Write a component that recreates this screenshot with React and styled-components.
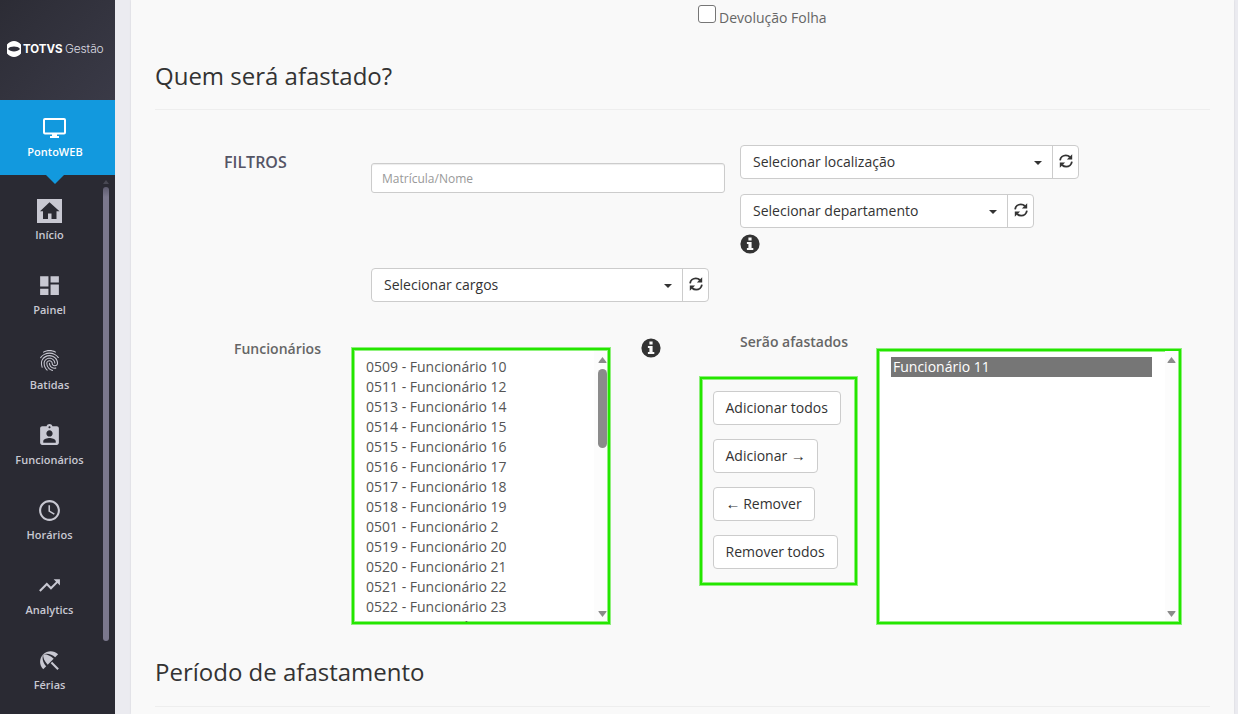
import React from "react";
import styled, { createGlobalStyle } from "styled-components";
import {
  MdDashboard,
  MdFingerprint,
  MdAssignmentInd,
  MdAccessTime,
  MdTrendingUp,
  MdBeachAccess,
} from "react-icons/md";

const employees = [
  "0509 - Funcionário 10",
  "0511 - Funcionário 12",
  "0513 - Funcionário 14",
  "0514 - Funcionário 15",
  "0515 - Funcionário 16",
  "0516 - Funcionário 17",
  "0517 - Funcionário 18",
  "0518 - Funcionário 19",
  "0501 - Funcionário 2",
  "0519 - Funcionário 20",
  "0520 - Funcionário 21",
  "0521 - Funcionário 22",
  "0522 - Funcionário 23",
  "0523 - Funcionário 24",
];

const navItems = [
  { label: "Início", icon: HomeBox },
  { label: "Painel", icon: MdDashboard },
  { label: "Batidas", icon: MdFingerprint },
  { label: "Funcionários", icon: MdAssignmentInd },
  { label: "Horários", icon: MdAccessTime },
  { label: "Analytics", icon: MdTrendingUp },
  { label: "Férias", icon: MdBeachAccess },
];

function HomeBox() {
  return (
    <svg width="25" height="24" viewBox="0 0 25 24" fill="currentColor">
      <path
        fillRule="evenodd"
        d="M0 0h25v24H0zM12.5 3.200 3 12.200h3V20h5v-5.600h3.500V20h5v-7.800h3z"
      />
    </svg>
  );
}

function Monitor() {
  return (
    <svg width="23" height="20" viewBox="0 0 23 20">
      <rect x="1" y="1" width="21" height="14.500" rx="1" fill="none" stroke="#fff" strokeWidth="2" />
      <path d="M9 16h5v2h2v2H7v-2h2z" fill="#fff" />
    </svg>
  );
}

function LogoMark() {
  return (
    <svg width="14" height="16" viewBox="0 0 14 16" fill="#fff">
      <path
        fillRule="evenodd"
        d="M0 3.500C2 1.200 4.300 0 7 0s5 1.200 7 3.500v9C12 14.800 9.700 16 7 16s-5-1.200-7-3.500zM1 8C2.200 9.700 4.400 10.400 7 10.400S11.800 9.700 13 8C11.800 6.300 9.600 5.600 7 5.600S2.200 6.300 1 8z"
      />
    </svg>
  );
}

function Refresh() {
  return (
    <svg width="14" height="14" viewBox="0 0 14 14">
      <g fill="none" stroke="#333" strokeWidth="1.800">
        <path d="M1.100 6.300C1.500 3.300 4 1.300 6.800 1.300c1.600 0 3 .6 4.100 1.700" />
        <path d="M12.900 7.700c-.4 3-2.900 5-5.700 5-1.600 0-3-.6-4.100-1.700" />
      </g>
      <path d="M13.200.2v5.300H7.900z" fill="#333" />
      <path d="M.8 13.800V8.500h5.300z" fill="#333" />
    </svg>
  );
}

function Info() {
  return (
    <InfoIcon viewBox="0 0 20 20">
      <path
        fillRule="evenodd"
        d="M10 .4a9.600 9.600 0 1 1 0 19.200A9.600 9.600 0 0 1 10 .4zM8.400 3.600v2.800h3.200V3.600zM6.900 7.900v2h1.500v4.200H6.900v2h6.400v-2h-1.700V7.900z"
      />
    </InfoIcon>
  );
}

function Picker({ label, width }) {
  return (
    <PickerBox $width={width}>
      <PickerText>{label}</PickerText>
      <Caret />
      <RefreshButton>
        <Refresh />
      </RefreshButton>
    </PickerBox>
  );
}

function ScrollTrack({ thumb }) {
  return (
    <Track>
      <Arrow viewBox="0 0 9 6">
        <path d="M4.500 0 8.500 5.200q.4.800-.6.800H1.100Q.1 6 .5 5.200z" />
      </Arrow>
      {thumb && <Thumb />}
      <Spacer />
      <Arrow viewBox="0 0 9 6">
        <path d="M4.500 6 8.500.8Q8.900 0 7.900 0H1.100Q.1 0 .5.800z" />
      </Arrow>
    </Track>
  );
}

function App() {
  return (
    <Page>
      <GlobalStyle />
      <Sidebar>
        <Logo>
          <LogoMark />
          <Brand>TOTVS</Brand>
          <Product>Gestão</Product>
        </Logo>
        <ActiveModule>
          <Monitor />
          <NavLabel>PontoWEB</NavLabel>
        </ActiveModule>
        <NavArea>
          <Nav>
            {navItems.map(({ label, icon: Icon }) => (
              <NavItem key={label}>
                <NavIcon>
                  <Icon size={25} />
                </NavIcon>
                <NavLabel>{label}</NavLabel>
              </NavItem>
            ))}
          </Nav>
          <NavScroll>
            <NavScrollArrow />
            <NavThumb />
          </NavScroll>
        </NavArea>
      </Sidebar>
      <Main>
        <CheckRow>
          <Checkbox type="checkbox" />
          <CheckLabel>Devolução Folha</CheckLabel>
        </CheckRow>
        <Title>Quem será afastado?</Title>
        <Filters>
          <FilterLabel>FILTROS</FilterLabel>
          <FilterColumn>
            <NameInput placeholder="Matrícula/Nome" />
            <Picker label="Selecionar cargos" width={338} />
          </FilterColumn>
          <PlaceColumn>
            <Picker label="Selecionar localização" width={339} />
            <Picker label="Selecionar departamento" width={294} />
            <Info />
          </PlaceColumn>
        </Filters>
        <Transfer>
          <ListLabel>Funcionários</ListLabel>
          <SourceList>
            <Options>
              {employees.map((name) => (
                <Option key={name}>{name}</Option>
              ))}
            </Options>
            <ScrollTrack thumb />
          </SourceList>
          <InfoCell>
            <Info />
          </InfoCell>
          <ActionColumn>
            <ActionLabel>Serão afastados</ActionLabel>
            <Actions>
              <Button $width={128}>Adicionar todos</Button>
              <Button $width={105}>
                Adicionar <ArrowText>→</ArrowText>
              </Button>
              <Button $width={102}>
                <ArrowText>←</ArrowText> Remover
              </Button>
              <Button $width={125}>Remover todos</Button>
            </Actions>
          </ActionColumn>
          <TargetList>
            <Options>
              <Option $selected>Funcionário 11</Option>
            </Options>
            <ScrollTrack />
          </TargetList>
        </Transfer>
        <Title>Período de afastamento</Title>
      </Main>
    </Page>
  );
}

const GlobalStyle = createGlobalStyle`
  * {
    box-sizing: border-box;
  }
  body {
    margin: 0;
    overflow: hidden;
    font-family: "Open Sans", sans-serif;
    font-size: 14px;
    line-height: 20px;
    color: #555;
  }
`;

const Page = styled.div`
  display: flex;
  height: 714px;
  background: #ebebf0;
  overflow: hidden;
`;

const Sidebar = styled.aside`
  display: flex;
  flex-direction: column;
  width: 115px;
  flex: none;
  background: #2a2a33;
`;

const Logo = styled.div`
  display: flex;
  align-items: center;
  height: 100px;
  flex: none;
  padding: 0 0 2px 7px;
  color: #fff;
  background: linear-gradient(135deg, #2c2c35, #3a3a47);
  line-height: 16px;
`;

const Brand = styled.span`
  width: 40px;
  margin: 0 2px 0 2px;
  font-family: Inter, sans-serif;
  font-weight: 700;
  font-size: 11.500px;
  letter-spacing: 0;
`;

const Product = styled.span`
  font-family: Inter, sans-serif;
  font-weight: 300;
  color: #dcdce2;
  font-size: 12px;
  letter-spacing: -0.150px;
`;

const ActiveModule = styled.div`
  position: relative;
  display: flex;
  flex-direction: column;
  align-items: center;
  gap: 4px;
  height: 75px;
  flex: none;
  padding: 18px 5px 0 0;
  color: #fff;
  background: #1299de;

  > svg {
    margin-right: 1px;
  }

  &::after {
    content: "";
    position: absolute;
    top: 75px;
    left: 46px;
    border: 9px solid transparent;
    border-top-color: #1299de;
    border-bottom: 0;
  }
`;

const NavLabel = styled.span`
  font-size: 11px;
  font-weight: 600;
  line-height: 20px;
`;

const NavArea = styled.div`
  display: flex;
  flex: 1;
  min-height: 0;
`;

const Nav = styled.nav`
  width: 99px;
  padding-top: 24px;
`;

const NavItem = styled.div`
  display: flex;
  flex-direction: column;
  align-items: center;
  height: 75px;
  color: #c8c8d2;
`;

const NavIcon = styled.span`
  display: flex;
  align-items: flex-end;
  height: 24px;
  margin-bottom: 2px;
`;

const NavScroll = styled.div`
  display: flex;
  flex-direction: column;
  align-items: center;
  width: 6px;
  margin-left: 4px;
  padding-top: 5px;
`;

const NavScrollArrow = styled.div`
  border: 3px solid transparent;
  border-top: 0;
  border-bottom: 4px solid #484853;
`;

const NavThumb = styled.div`
  width: 6px;
  height: 454px;
  margin-top: 3px;
  border-radius: 3px;
  background: linear-gradient(#5d5b6e, #7b788d 10px);
`;

const Main = styled.main`
  width: 1103px;
  margin-left: 16px;
  padding: 0 24px;
  background: #f9f9f9;
  box-shadow: 0 0 2px rgba(0, 0, 0, 0.1);
`;

const CheckRow = styled.label`
  display: flex;
  align-items: flex-start;
  height: 46px;
  padding: 5px 0 0 543px;
`;

const Checkbox = styled.input`
  appearance: none;
  width: 18px;
  height: 18px;
  margin: 0 3px 0 0;
  border: 1px solid #767676;
  border-radius: 3px;
  background: #fff;
`;

const CheckLabel = styled.span`
  padding-top: 3px;
  color: #666;
`;

const Title = styled.h2`
  height: 64px;
  margin: 0;
  padding-top: 13px;
  border-bottom: 1px solid #eee;
  color: #333;
  font-size: 24px;
  font-weight: 400;
  line-height: 34px;

  &:last-child {
    height: 65px;
  }
`;

const Filters = styled.section`
  display: flex;
  align-items: flex-start;
  height: 193px;
  padding: 35px 0 0 69px;
`;

const FilterLabel = styled.div`
  width: 147px;
  padding-top: 7px;
  color: #556;
  font-size: 16px;
  font-weight: 600;
`;

const FilterColumn = styled.div`
  display: flex;
  flex-direction: column;
  gap: 75px;
  width: 369px;
  padding-top: 18px;
`;

const PlaceColumn = styled.div`
  display: flex;
  flex-direction: column;
  gap: 15px;

  > svg {
    margin-top: -9px;
  }
`;

const NameInput = styled.input`
  width: 354px;
  height: 30px;
  padding: 0 10px;
  border: 1px solid #ccc;
  border-radius: 3px;
  font-family: inherit;
  font-size: 12px;
  background: #fff;
  box-shadow: inset 0 1px 1px rgba(0, 0, 0, 0.075);

  &::placeholder {
    color: #999;
  }
`;

const PickerBox = styled.div`
  display: flex;
  align-items: center;
  width: ${(props) => props.$width}px;
  height: 34px;
  border: 1px solid #ccc;
  border-radius: 4px;
  background: #fff;
  color: #333;
`;

const PickerText = styled.span`
  flex: 1;
  padding-left: 12px;
`;

const Caret = styled.span`
  margin: 2px 10px 0 0;
  border: 4px solid transparent;
  border-top-color: #333;
  border-bottom: 0;
`;

const RefreshButton = styled.span`
  display: flex;
  width: 26px;
  height: 32px;
  padding: 8px 0 0 6px;
  border-left: 1px solid #ccc;
`;

const InfoIcon = styled.svg`
  display: block;
  width: 20px;
  height: 20px;
  fill: #333;
`;

const Transfer = styled.section`
  display: flex;
  align-items: flex-start;
  height: 339px;
  padding: 36px 0 0 79px;
`;

const ListLabel = styled.div`
  width: 118px;
  color: #666;
  font-weight: 600;
`;

// highlighted frame shared by the two lists and the button group
const Frame = styled.div`
  border: 2px solid #24e600;
  box-shadow: 0 0 0 1px rgba(36, 230, 0, 0.5), inset 0 0 0 1px rgba(36, 230, 0, 0.5);
`;

const SourceList = styled(Frame)`
  display: flex;
  width: 258px;
  height: 276px;
  margin-top: 9px;
  padding: 1px 0 0 10px;
  background: #fff;
`;

const TargetList = styled(Frame)`
  display: flex;
  width: 304px;
  height: 275px;
  margin: 10px 0 0 20px;
  padding: 0 0 0 12px;
  background: #fff;
`;

const Options = styled.ul`
  flex: 1;
  margin: 0;
  padding: 6px 13px 0 0;
  list-style: none;
  overflow: hidden;
`;

const Option = styled.li`
  height: 20px;
  padding-left: 2px;
  color: ${(props) => (props.$selected ? "#fff" : "#555")};
  background: ${(props) => (props.$selected ? "#767676" : "transparent")};
`;

const Track = styled.div`
  display: flex;
  flex-direction: column;
  align-items: flex-end;
  width: 13px;
  margin: 0 1px 1px 0;
  padding: 6px 0 4px;
  background: #fcfcfc;

  ${TargetList} & {
    padding-right: 2px;
  }
`;

const Arrow = styled.svg`
  width: 9px;
  height: 6px;
  fill: #8b8b8b;
`;

const Thumb = styled.div`
  width: 9px;
  height: 79px;
  margin-top: 6px;
  border-radius: 5px;
  background: #8b8b8b;
`;

const Spacer = styled.div`
  flex: 1;
`;

const InfoCell = styled.div`
  width: 90px;
  margin-top: -1px;
  padding: 0 0 0 31px;
`;

const ActionColumn = styled.div`
  width: 157px;
`;

const ActionLabel = styled.div`
  padding: 0 0 0 40px;
  margin-top: -7px;
  height: 45px;
  color: #666;
  font-weight: 600;
`;

const Actions = styled(Frame)`
  display: flex;
  flex-direction: column;
  gap: 14px;
  height: 208px;
  padding: 12px 0 0 11px;
`;

const Button = styled.button`
  width: ${(props) => props.$width}px;
  height: 34px;
  padding: 0 0 0 11.500px;
  border: 1px solid #ccc;
  border-radius: 4px;
  background: #fff;
  color: #333;
  font-family: inherit;
  font-size: 14px;
  line-height: 20px;
  text-align: left;
  white-space: nowrap;
`;

const ArrowText = styled.span`
  display: inline-block;
  width: 14px;
  font-family: "Liberation Serif", serif;
  font-size: 15px;
  line-height: 16px;
`;

export default App;
